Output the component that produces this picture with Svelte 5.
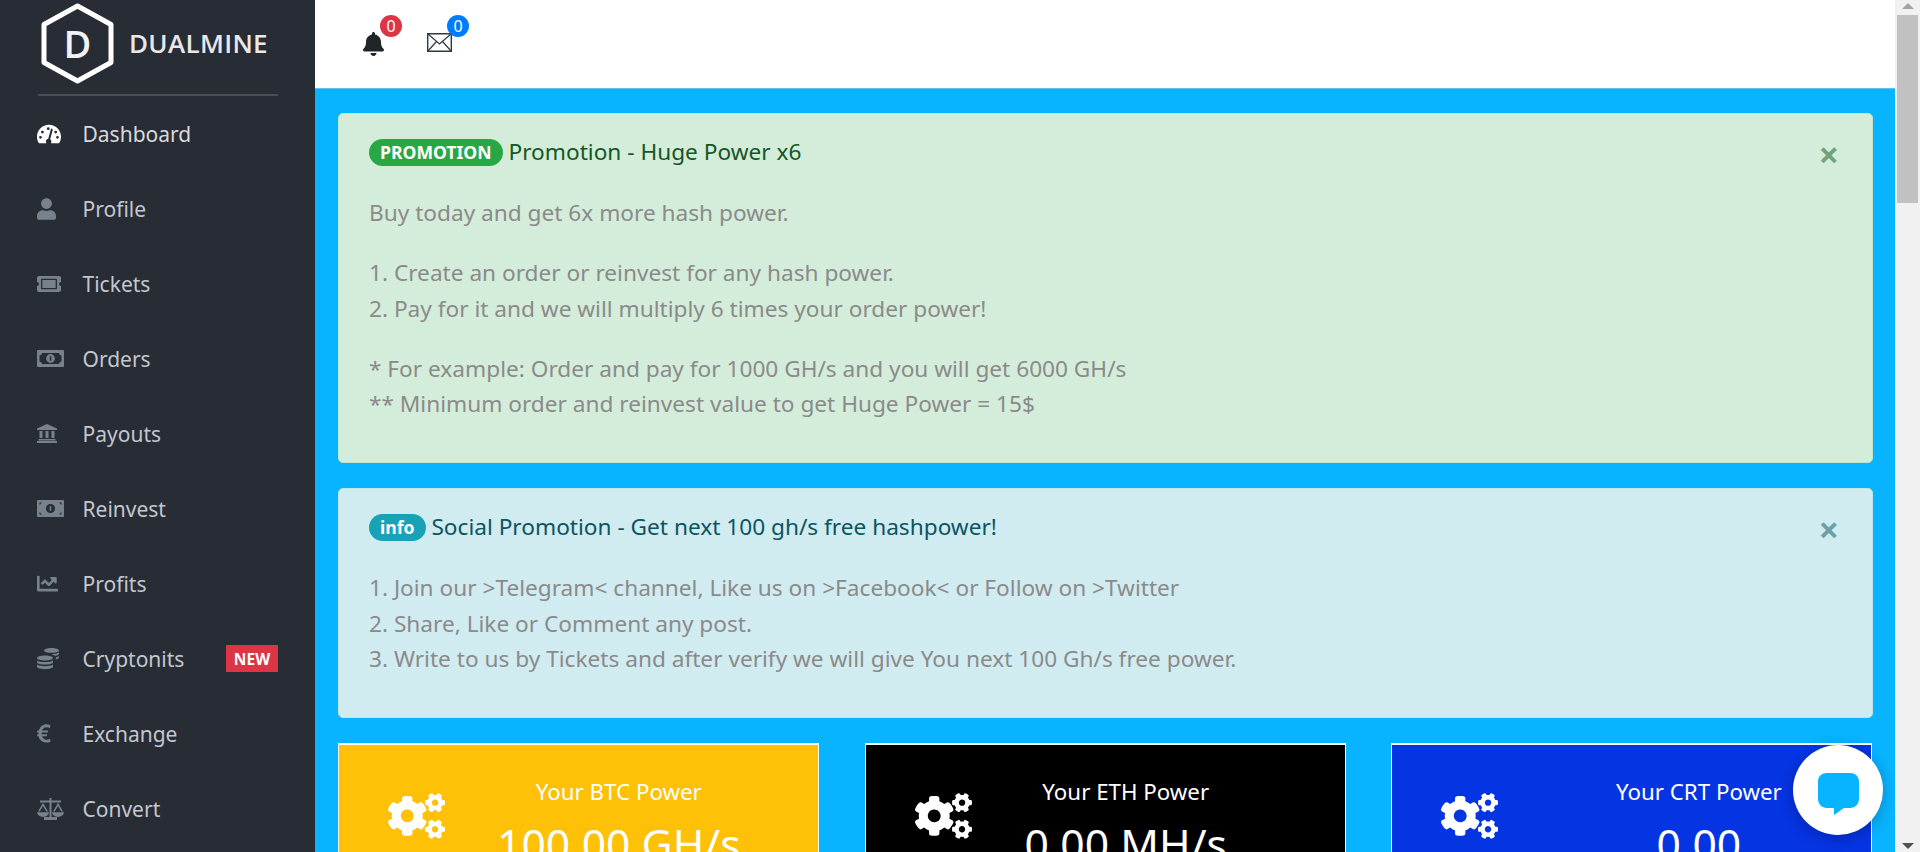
<script>
  const circle = (cx, cy, r) => `M${cx - r} ${cy}a${r} ${r} 0 1 0 ${2 * r} 0a${r} ${r} 0 1 0-${2 * r} 0z`;

  const nav = [
    { label: 'Dashboard', w: 24, h: 20, y: 0, vb: '0 32 576 448', active: true,
      d: `M288 32C128.94 32 0 160.94 0 320c0 52.8 14.25 102.26 39.06 144.8 5.61 9.62 16.3 15.2 27.44 15.2h443c11.14 0 21.83-5.58 27.44-15.2C561.75 422.26 576 372.8 576 320c0-159.06-128.94-288-288-288z${circle(270, 128, 34)}${circle(84, 336, 34)}${circle(130, 210, 34)}${circle(492, 336, 34)}${circle(448, 210, 34)}M226 480c-8-12-12-26-12-40 0-34 24-62 56-68l62-228c3-13 16-20 29-17s20 16 17 29l-62 228c18 13 30 34 30 56 0 14-4 28-12 40z` },
    { label: 'Profile', w: 19, h: 22, vb: '0 0 448 512',
      d: 'M224 256c70.7 0 128-57.3 128-128S294.7 0 224 0 96 57.3 96 128s57.3 128 128 128zm89.6 32h-16.7c-22.2 10.2-46.9 16-72.9 16s-50.6-5.8-72.9-16h-16.7C60.2 288 0 348.2 0 422.4V464c0 26.5 21.5 48 48 48h352c26.5 0 48-21.5 48-48v-41.6c0-74.2-60.2-134.4-134.4-134.4z' },
    { label: 'Tickets', w: 24, h: 18, vb: '0 64 576 384',
      d: 'M128 160h320v192H128V160zm400 96c0 26.51 21.49 48 48 48v96c0 26.51-21.49 48-48 48H48c-26.51 0-48-21.49-48-48v-96c26.51 0 48-21.49 48-48s-21.49-48-48-48v-96c0-26.51 21.49-48 48-48h480c26.51 0 48 21.49 48 48v96c-26.51 0-48 21.49-48 48zm-48-104c0-13.255-10.745-24-24-24H120c-13.255 0-24 10.745-24 24v208c0 13.255 10.745 24 24 24h336c13.255 0 24-10.745 24-24V152z' },
    { label: 'Orders', w: 27, h: 17, vb: '0 0 27 17',
      d: `M1 0h25a1 1 0 0 1 1 1v15a1 1 0 0 1-1 1H1a1 1 0 0 1-1-1V1a1 1 0 0 1 1-1zM5 3C5 4.5 3.5 5.500 2.500 5.500v6C3.500 11.500 5 12.500 5 14h17c0-1.500 1.500-2.500 2.500-2.500v-6C23.500 5.500 22 4.500 22 3z${circle(13.5, 8.5, 4.4)}M12.700 6.200h1.600v4.600h-1.600z` },
    { label: 'Payouts', w: 20, h: 19, vb: '0 0 20 19',
      d: 'M10 0L20 4.500V6H0V4.500zM2.500 7h3v7h-3zM8.500 7h3v7h-3zM14.500 7h3v7h-3zM1.500 15h17v1.500h-17zM0 17h20v2H0z' },
    { label: 'Reinvest', w: 27, h: 17, vb: '0 0 27 17',
      d: `M1 0h25a1 1 0 0 1 1 1v15a1 1 0 0 1-1 1H1a1 1 0 0 1-1-1V1a1 1 0 0 1 1-1z${circle(13.5, 8.5, 4.6)}M12.700 6.200h1.600v4.600h-1.600zM2.500 2.500h2.500L2.500 5zM24.500 2.500h-2.500L24.500 5zM2.500 14.500h2.500L2.500 12zM24.500 14.500h-2.500L24.500 12z` },
    { label: 'Profits', w: 21, h: 17, vb: '0 64 512 384',
      d: 'M496 384H64V80c0-8.84-7.16-16-16-16H16C7.16 64 0 71.16 0 80v336c0 17.67 14.33 32 32 32h464c8.84 0 16-7.16 16-16v-32c0-8.84-7.16-16-16-16zM464 96H345.94c-21.38 0-32.09 25.85-16.97 40.97l32.4 32.4L288 242.75l-73.37-73.37c-12.5-12.5-32.76-12.5-45.25 0l-68.69 68.69c-6.25 6.25-6.25 16.38 0 22.63l22.62 22.62c6.25 6.25 16.38 6.25 22.63 0L192 237.25l73.37 73.37c12.5 12.5 32.76 12.5 45.25 0l96-96 32.4 32.4c15.12 15.12 40.97 4.41 40.97-16.97V112c.01-8.84-7.15-16-15.99-16z' },
    { label: 'Cryptonits', w: 22, h: 22, vb: '0 0 22 22', badge: 'NEW',
      d: 'M14.500 0c4 0 7.500 1 7.500 2.400s-3.500 2.400-7.500 2.400S7 3.800 7 2.400 10.500 0 14.500 0zM22 4.200v1.600c0 .9-1.500 1.700-4 2.100-1-.9-2.500-1.400-4-1.700 4 0 6.500-.8 8-2zM22 8v1.600c0 .8-1.200 1.500-3.200 2V9.400c1.300-.3 2.500-.8 3.200-1.400zM8 7.500c4.400 0 8 1.100 8 2.500s-3.600 2.500-8 2.500S0 11.400 0 10s3.600-2.500 8-2.500zM0 12.400c1.300 1.100 4.500 1.700 8 1.700s6.700-.6 8-1.700v1.800c0 1.300-3.600 2.400-8 2.400s-8-1.100-8-2.400zM0 16.600c1.300 1.100 4.500 1.700 8 1.700s6.700-.6 8-1.700v2.200c0 1.300-3.600 2.400-8 2.400s-8-1.100-8-2.400z' },
    { label: 'Exchange', w: 14, h: 19, vb: '0 0 14 19',
      d: 'M13.500 1.200L12.800 4C11.800 3.500 10.600 3.200 9.500 3.200 7.300 3.200 5.700 4.500 5 6.500h6.300l-.5 2H4.600c-.05.6-.05 1.200 0 1.800h5.600l-.5 2H5.100c.7 2.100 2.300 3.400 4.500 3.400 1.300 0 2.600-.4 3.600-1l.3 3c-1.300.6-2.700.9-4.200.9-3.900 0-6.800-2.400-7.700-6.300H0l.4-2h1.200c-.05-.6-.05-1.200 0-1.800H0l.4-2h1.500C2.900 2.600 5.800.2 9.500.2c1.400 0 2.800.3 4 1z' },
    { label: 'Convert', w: 27, h: 22, vb: '0 0 27 22',
      d: 'M12.500 0h2v2.500h-2zM3 2.500h21v2H3zM12.500 4.500h2V19h-2zM7 19h13v3H7zM6 4.800L1 13.500h1.800L6 8l3.200 5.500H11zM21 4.800L16 13.500h1.800L21 8l3.200 5.500H26zM0 14.200h12a6 4.800 0 0 1-12 0zM15 14.200h12a6 4.800 0 0 1-12 0z' }
  ];

  const cogs = 'M512.1 191l-8.2 14.3c-3 5.3-9.4 7.5-15.1 5.4-11.8-4.4-22.6-10.7-32.1-18.6-4.6-3.8-5.8-10.5-2.8-15.7l8.2-14.3c-6.9-8-12.3-17.3-15.9-27.4h-16.5c-6 0-11.2-4.3-12.2-10.3-2-12-2.1-24.6 0-37.1 1-6 6.2-10.4 12.2-10.4h16.5c3.6-10.1 9-19.4 15.9-27.4l-8.2-14.3c-3-5.2-1.9-11.9 2.8-15.7 9.5-7.9 20.4-14.2 32.1-18.6 5.7-2.1 12.1.1 15.1 5.4l8.2 14.3c10.5-1.9 21.2-1.9 31.7 0L552 6.3c3-5.3 9.4-7.5 15.1-5.4 11.8 4.4 22.6 10.7 32.1 18.6 4.6 3.8 5.8 10.5 2.8 15.7l-8.2 14.3c6.9 8 12.3 17.3 15.9 27.4h16.5c6 0 11.2 4.3 12.2 10.3 2 12 2.1 24.6 0 37.1-1 6-6.2 10.4-12.2 10.4h-16.5c-3.6 10.1-9 19.4-15.9 27.4l8.2 14.3c3 5.2 1.9 11.9-2.8 15.7-9.5 7.9-20.4 14.2-32.1 18.6-5.7 2.1-12.1-.1-15.1-5.4l-8.2-14.3c-10.4 1.9-21.2 1.9-31.7 0zm-10.5-58.800c38.500 29.600 82.400-14.300 52.800-52.800-38.500-29.700-82.400 14.300-52.800 52.800zM386.300 286.100l33.700 16.800c10.100 5.800 14.500 18.100 10.500 29.100-8.900 24.200-26.400 46.400-42.600 65.800-7.400 8.900-20.200 11.100-30.300 5.300l-29.100-16.800c-16 13.700-34.600 24.600-54.900 31.700v33.600c0 11.600-8.300 21.600-19.700 23.600-24.600 4.200-50.400 4.400-75.900 0-11.500-2-20-11.900-20-23.600V418c-20.300-7.200-38.900-18-54.900-31.700L74 403c-10 5.800-22.900 3.600-30.300-5.300-16.200-19.400-33.300-41.600-42.200-65.700-4-10.900.4-23.200 10.500-29.100l33.300-16.800c-3.900-20.900-3.900-42.400 0-63.400L12 205.800c-10.100-5.800-14.600-18.100-10.500-29 8.900-24.200 26-46.400 42.200-65.800 7.400-8.900 20.200-11.100 30.300-5.300l29.100 16.800c16-13.700 34.600-24.600 54.900-31.700V57.100c0-11.500 8.200-21.500 19.600-23.500 24.600-4.200 50.500-4.400 76-.1 11.500 2 20 11.900 20 23.600v33.600c20.300 7.200 38.900 18 54.900 31.700l29.100-16.800c10-5.800 22.900-3.600 30.300 5.300 16.200 19.400 33.200 41.600 42.100 65.800 4 10.900.1 23.200-10 29.100l-33.700 16.800c3.900 21 3.900 42.500 0 63.500zm-117.600 21.100c59.200-77-28.700-164.900-105.700-105.700-59.200 77 28.700 164.900 105.700 105.700zm243.400 182.700l-8.200 14.300c-3 5.300-9.400 7.500-15.100 5.400-11.800-4.400-22.600-10.700-32.100-18.600-4.600-3.800-5.800-10.500-2.800-15.700l8.200-14.300c-6.900-8-12.300-17.300-15.900-27.400h-16.500c-6 0-11.200-4.300-12.200-10.300-2-12-2.100-24.600 0-37.100 1-6 6.200-10.400 12.200-10.400h16.500c3.600-10.100 9-19.400 15.900-27.400l-8.200-14.300c-3-5.200-1.900-11.900 2.800-15.700 9.500-7.900 20.400-14.200 32.100-18.600 5.700-2.100 12.100.1 15.100 5.400l8.200 14.300c10.500-1.900 21.200-1.900 31.700 0l8.200-14.300c3-5.300 9.400-7.500 15.100-5.400 11.800 4.400 22.600 10.700 32.100 18.600 4.600 3.800 5.800 10.500 2.800 15.700l-8.200 14.300c6.900 8 12.300 17.300 15.900 27.400h16.500c6 0 11.200 4.300 12.200 10.300 2 12 2.100 24.600 0 37.100-1 6-6.200 10.400-12.200 10.400h-16.500c-3.600 10.100-9 19.400-15.900 27.400l8.200 14.300c3 5.200 1.900 11.900-2.800 15.700-9.500 7.900-20.400 14.200-32.100 18.600-5.700 2.100-12.100-.1-15.100-5.400l-8.200-14.300c-10.400 1.900-21.200 1.900-31.700 0zM501.600 431c38.500 29.600 82.400-14.300 52.800-52.800-38.500-29.600-82.400 14.300-52.800 52.800z';

  const cards = [
    { cls: 'btc', title: 'Your BTC Power', value: '100.00 GH/s' },
    { cls: 'eth', title: 'Your ETH Power', value: '0.00 MH/s' },
    { cls: 'crt', title: 'Your CRT Power', value: '0.00' }
  ];
</script>

<div class="page">
  <aside class="sidebar">
    <div class="brand">
      <div class="hex">
        <svg width="73" height="81" viewBox="0 0 73 81"><path d="M36.500 3L70 21.500V59.500L36.500 78L3 59.500V21.500Z" fill="none" stroke="#fff" stroke-width="5" stroke-linejoin="round"/></svg>
        <span class="hex-d">D</span>
      </div>
      <span class="brand-name">DUALMINE</span>
    </div>
    <nav class="nav">
      {#each nav as item}
        <div class="nav-item" class:active={item.active}>
          <span class="nav-icon">
            <svg width={item.w} height={item.h} viewBox={item.vb}><path d={item.d} fill-rule="evenodd"/></svg>
          </span>
          <span class="nav-label">{item.label}</span>
          {#if item.badge}<span class="new">{item.badge}</span>{/if}
        </div>
      {/each}
    </nav>
  </aside>

  <div class="column">
    <header class="topbar">
      <div class="notif bell">
        <svg width="21" height="24" viewBox="0 0 448 512"><path fill="#212529" d="M224 512c35.320 0 63.970-28.650 63.970-64H160.030c0 35.350 28.650 64 63.970 64zm215.390-149.710c-19.320-20.760-55.470-51.990-55.470-154.290 0-77.700-54.480-139.900-127.940-155.160V32c0-17.670-14.320-32-31.980-32s-31.980 14.330-31.980 32v20.840C118.560 68.100 64.080 130.300 64.080 208c0 102.300-36.150 133.530-55.470 154.290-6 6.450-8.660 14.160-8.610 21.710.11 16.400 12.980 32 32.100 32h383.800c19.120 0 32-15.600 32.100-32 .05-7.550-2.610-15.270-8.610-21.710z"/></svg>
        <span class="count red">0</span>
      </div>
      <div class="notif mail">
        <svg width="25" height="19" viewBox="0 0 25 19"><path fill="#fff" stroke="#2f3a44" stroke-width="1.400" d="M.7.7h23.600v17.600H.7z"/><path fill="none" stroke="#2f3a44" stroke-width="1.200" d="M1 1l11.500 10L24 1M1 18l8.500-9.500M24 18l-8.500-9.500"/></svg>
        <span class="count blue">0</span>
      </div>
    </header>

    <main class="content">
      <section class="alert success">
        <button class="close" aria-label="Close">×</button>
        <div class="alert-title"><span class="tag tag-green">PROMOTION</span> Promotion - Huge Power x6</div>
        <p>Buy today and get 6x more hash power.</p>
        <p>1. Create an order or reinvest for any hash power.<br />2. Pay for it and we will multiply 6 times your order power!</p>
        <p>* For example: Order and pay for 1000 GH/s and you will get 6000 GH/s<br />** Minimum order and reinvest value to get Huge Power = 15$</p>
      </section>

      <section class="alert info">
        <button class="close" aria-label="Close">×</button>
        <div class="alert-title"><span class="tag tag-teal">info</span> Social Promotion - Get next 100 gh/s free hashpower!</div>
        <p>1. Join our &gt;Telegram&lt; channel, Like us on &gt;Facebook&lt; or Follow on &gt;Twitter<br />2. Share, Like or Comment any post.<br />3. Write to us by Tickets and after verify we will give You next 100 Gh/s free power.</p>
      </section>

      <div class="cards">
        {#each cards as card}
          <div class="card {card.cls}">
            <svg class="cogs" width="57" height="46" viewBox="0 0 640 512"><path d={cogs} fill="#fff" fill-rule="evenodd"/></svg>
            <div class="card-text">
              <div class="card-title">{card.title}</div>
              <div class="card-value">{card.value}</div>
            </div>
          </div>
        {/each}
      </div>
    </main>
  </div>

  <div class="scrollbar">
    <span class="arrow up"></span>
    <span class="thumb"></span>
    <span class="arrow down"></span>
  </div>

  <button class="chat" aria-label="Open chat">
    <svg width="41" height="42" viewBox="0 0 41 42"><path fill="#08b3ff" d="M9 0h23c5 0 9 3 9 9v17c0 5-4 9-9 9h-6l-10 7v-7H9c-5 0-9-4-9-9V9c0-6 4-9 9-9z"/></svg>
  </button>
</div>

<style>
  :global(body) {
    margin: 0;
    font-family: "Noto Sans", "Open Sans", sans-serif;
  }
  .page {
    display: flex;
    height: 852px;
    overflow: hidden;
    position: relative;
  }
  .sidebar {
    width: 315px;
    flex: none;
    background: #282c34;
    padding: 0 37px 0 37px;
    box-sizing: border-box;
  }
  .brand {
    height: 96px;
    box-sizing: border-box;
    display: flex;
    align-items: center;
    gap: 15px;
    padding: 0 0 8px 3px;
    border-bottom: 2px solid #4a4d52;
    margin-left: 1px;
  }
  .hex {
    position: relative;
    width: 73px;
    height: 81px;
    flex: none;
  }
  .hex svg {
    display: block;
  }
  .hex-d {
    position: absolute;
    inset: 0;
    display: flex;
    align-items: center;
    justify-content: center;
    color: #f2f2f2;
    font: 600 38px "Open Sans", sans-serif;
  }
  .brand-name {
    color: #e8e8e8;
    font: 600 26px "Open Sans", sans-serif;
    letter-spacing: 0.3px;
  }
  .nav-item {
    height: 75px;
    display: flex;
    align-items: center;
    color: #c2c7d0;
    font-size: 21px;
  }
  .nav-item.active {
    color: #d8dadf;
  }
  .nav-icon {
    width: 45.500px;
    flex: none;
    display: flex;
    align-items: center;
    fill: #78828d;
  }
  .nav-item.active .nav-icon {
    fill: #fff;
  }
  .nav-label {
    flex: 1;
  }
  .new {
    background: #dc3545;
    color: #fff;
    font-size: 15.500px;
    font-weight: 700;
    width: 52px;
    height: 27px;
    display: flex;
    align-items: center;
    justify-content: center;
  }
  .column {
    flex: 1;
    min-width: 0;
    display: flex;
    flex-direction: column;
  }
  .topbar {
    height: 89px;
    flex: none;
    box-sizing: border-box;
    background: #fff;
    display: flex;
    align-items: center;
    gap: 42px;
    padding: 0 0 0 48px;
    border-bottom: 1px solid #5cc4ef;
  }
  .notif {
    position: relative;
    display: flex;
  }
  .mail {
    margin-bottom: 4px;
    margin-left: 1px;
  }
  .count {
    position: absolute;
    width: 22px;
    height: 22px;
    border-radius: 50%;
    color: #fff;
    font-size: 16px;
    display: flex;
    align-items: center;
    justify-content: center;
  }
  .bell .count { left: 17px; top: -17px; }
  .mail .count { left: 20px; top: -18px; }
  .red { background: #dc3545; }
  .blue { background: #007bff; }
  .content {
    flex: 1;
    background: #08b3ff;
    padding: 24px 22px 0 23px;
    display: flex;
    flex-direction: column;
    gap: 25px;
    overflow: hidden;
  }
  .alert {
    position: relative;
    flex: none;
    box-sizing: border-box;
    padding: 21px 30px 16px;
    border-radius: 5px;
    border: 1px solid;
    font-size: 22.650px;
    line-height: 35.500px;
    color: #8a8a8a;
  }
  .success { background: #d4edda; border-color: #c3e6cb; height: 350px; }
  .info { background: #d1ecf1; border-color: #bee5eb; height: 230px; }
  .alert p {
    margin: 0 0 24.500px;
  }
  .alert-title {
    font-size: 22.650px;
    line-height: 34px;
    margin-bottom: 26px;
  }
  .success .alert-title, .success .close { color: #155724; }
  .info .alert-title, .info .close { color: #0c5460; }
  .tag {
    display: inline-block;
    color: #fff;
    font-size: 17.600px;
    font-weight: 700;
    line-height: 27px;
    padding: 0 11px;
    border-radius: 14px;
    vertical-align: 1px;
  }
  .tag-green { background: #28a745; }
  .tag-teal { background: #17a2b8; }
  .close {
    position: absolute;
    right: 33px;
    top: 22px;
    border: 0;
    padding: 0;
    background: none;
    font: 700 36px/38px "Noto Sans", sans-serif;
    opacity: 0.5;
  }
  .cards {
    display: grid;
    grid-template-columns: repeat(3, 481px);
    justify-content: space-between;
    flex: none;
    margin-right: 1px;
  }
  .card {
    height: 240px;
    box-sizing: border-box;
    border: 1px solid #fff;
    border-top-width: 2px;
    display: flex;
    align-items: flex-start;
    padding: 48px 0 0 49px;
    color: #fff;
  }
  .btc { background: #ffc107; }
  .eth { background: #000; }
  .crt { background: #0534e3; }
  .cogs {
    flex: none;
  }
  .card-text {
    text-align: center;
    margin-top: -19px;
  }
  .btc .card-text { margin-left: 52px; }
  .eth .card-text { margin-left: 53px; }
  .crt .card-text { margin-left: 118px; }
  .card-title {
    font-size: 22.300px;
    line-height: 36px;
  }
  .card-value {
    font-size: 42.700px;
    line-height: 60px;
    margin-top: 4px;
  }
  .scrollbar {
    width: 25px;
    flex: none;
    background: #f1f1f1;
    display: flex;
    flex-direction: column;
    align-items: center;
  }
  .thumb {
    width: 21px;
    height: 188px;
    margin-top: 6px;
    background: #c1c1c1;
  }
  .arrow {
    width: 0;
    height: 0;
    border-left: 6px solid transparent;
    border-right: 6px solid transparent;
  }
  .up {
    margin-top: 3px;
    border-bottom: 6px solid #a3a3a3;
  }
  .down {
    margin-top: auto;
    margin-bottom: 3px;
    border-top: 6px solid #505050;
  }
  .chat {
    position: absolute;
    left: 1793px;
    top: 745px;
    width: 90px;
    height: 90px;
    border-radius: 50%;
    border: 0;
    padding: 0;
    background: #fff;
    box-shadow: 0 3px 14px rgba(0, 0, 0, 0.25);
    display: flex;
    align-items: center;
    justify-content: center;
  }
  .chat svg {
    margin-top: 7px;
  }
</style>
